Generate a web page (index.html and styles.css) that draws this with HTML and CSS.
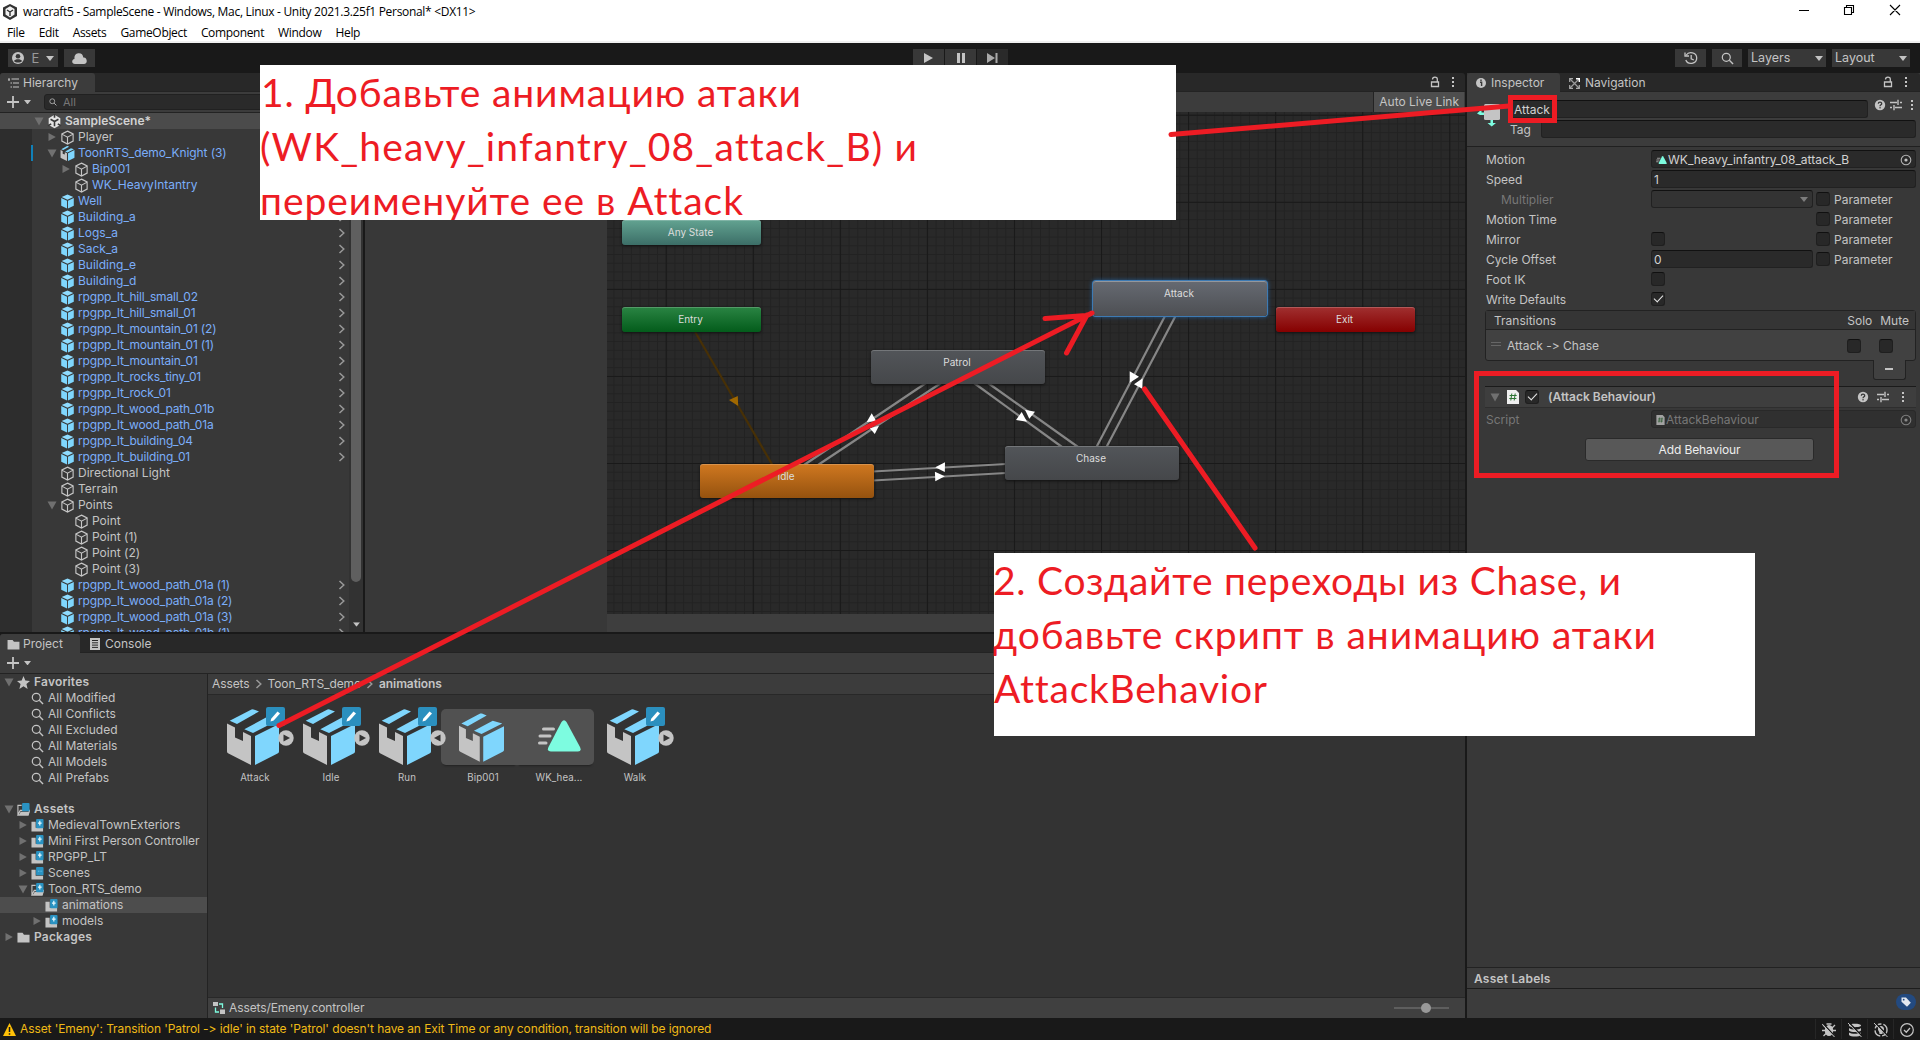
FILE: index.html
```html
<!DOCTYPE html>
<html lang="ru">
<head>
<meta charset="utf-8">
<title>warcraft5 - SampleScene - Unity</title>
<link rel="stylesheet" href="styles.css">
</head>
<body>
<svg class="defs" aria-hidden="true">
  <symbol id="cube" viewBox="0 0 16 16"><path d="M8 1.2 14 4.2V11.8L8 15 2 11.8V4.2ZM2 4.4 8 7.6 14 4.4M8 7.6V15" fill="none" stroke="#c6c6c6" stroke-width="1.2"/></symbol>
  <symbol id="prefab" viewBox="0 0 16 16"><path d="M8 .5 14.2 3.3 8 6.2 1.800 3.300Z" fill="#8fdcff"/><path d="M1.300 4.300 7.500 7.200V15.500L1.300 12.400Z M8.500 7.200 14.700 4.300V12.400L8.500 15.500Z" fill="#7fd6fd"/></symbol>
  <symbol id="model" viewBox="0 0 52 56"><path d="M0 14.500 8 18.500V28.500L16 32V23L24 27V56L1.500 44.500Q0 43.800 0 42.500Z" fill="#c4c4c4"/><path d="M28 27 52 15V42.500Q52 43.800 50.500 44.500L28 56Z" fill="#7fd6fd"/><path d="M2.700 11.700 24.500.4Q25.500 0 26.500.4L32 2.500 10 15ZM17.300 20.300 39 8.500 50 11.700 26 24Z" fill="#7fd6fd"/></symbol>
  <symbol id="right" viewBox="0 0 10 10"><path d="M1.500 1 8.800 5 1.500 9Z" fill="#707070"/></symbol>
  <symbol id="down" viewBox="0 0 10 10"><path d="M.5 1.500H9.500L5 9.500Z" fill="#707070"/></symbol>
  <symbol id="caret" viewBox="0 0 8 5"><path d="M0 0H8L4 5Z" fill="#c4c4c4"/></symbol>
  <symbol id="chev" viewBox="0 0 8 10"><path d="M1.500 1 5.800 5 1.500 9" fill="none" stroke="#999" stroke-width="1.500"/></symbol>
  <symbol id="unity" viewBox="0 0 16 16"><path d="M8 .8 14.200 4.400V11.600L8 15.200 1.800 11.600V4.400Z" fill="#e4e4e4"/><path d="M8 8V13M8 8 3.800 5.600M8 8 12.200 5.600M8 0V4M1 12.500 4.500 10.500M15 12.500 11.500 10.500" stroke="#3a3a3a" stroke-width="1.700" fill="none"/></symbol>
  <symbol id="search" viewBox="0 0 14 14"><circle cx="5.700" cy="5.700" r="4.300" fill="none" stroke="#c4c4c4" stroke-width="1.300"/><path d="M9 9 13 13" stroke="#c4c4c4" stroke-width="1.500"/></symbol>
  <symbol id="folder" viewBox="0 0 14 12"><path d="M.5 1H6L7.500 3H13.500V11.500H.5Z" fill="#c4c4c4"/></symbol>
  <symbol id="folderadd" viewBox="0 0 14 14"><path d="M.5 3H5V9.500H13V13.500H.5Z" fill="#c4c4c4"/><rect x="5.500" width="8" height="10" rx="1" fill="#2a93c3"/><path d="M9.500 2V7M7.500 4.500H11.500" stroke="#e8faff" stroke-width="1.300"/></symbol>
  <symbol id="foldermod" viewBox="0 0 14 14"><path d="M.5 3H5V9.500H13V13.500H.5Z" fill="#c4c4c4"/><rect x="5.500" width="8" height="9" rx="1" fill="#2a93c3"/><path d="M7.500 4.500H12" stroke="#71c8ee" stroke-width="1" stroke-dasharray="1 .8"/></symbol>
  <symbol id="openadd" viewBox="0 0 14 14"><path d="M1 13V2.500H5M1 13 3.500 8H13.500L12 13Z" fill="none" stroke="#c4c4c4" stroke-width="1.200"/><path d="M2 13 4 9.500H13.500L12 13Z" fill="#c4c4c4"/><rect x="5.500" width="8" height="10" rx="1" fill="#2a93c3"/><path d="M9.500 2V7M7.500 4.500H11.500" stroke="#e8faff" stroke-width="1.300"/></symbol>
  <symbol id="openmod" viewBox="0 0 14 14"><path d="M1 13V2.500H5M1 13 3.500 8H13.500L12 13Z" fill="none" stroke="#c4c4c4" stroke-width="1.200"/><path d="M2 13 4 9.500H13.500L12 13Z" fill="#c4c4c4"/><rect x="5.500" width="8" height="9" rx="1" fill="#2a93c3"/></symbol>
  <symbol id="lock" viewBox="0 0 10 12"><path d="M1.500 6H8.500V10.500H1.500ZM2.500 3.500C2.500.5 7.300.5 7.300 3V6" fill="none" stroke="#c4c4c4" stroke-width="1.300"/></symbol>
  <symbol id="dots" viewBox="0 0 4 12"><path d="M1 1H3V3H1ZM1 5H3V7H1ZM1 9H3V11H1Z" fill="#c4c4c4"/></symbol>
  <symbol id="help" viewBox="0 0 12 12"><circle cx="6" cy="6" r="5.200" fill="#c4c4c4"/><path d="M4.300 4.800C4.300 2.600 7.700 2.600 7.700 4.700 7.700 5.900 6 5.800 6 7.200" fill="none" stroke="#383838" stroke-width="1.300"/><rect x="5.400" y="8.100" width="1.300" height="1.300" fill="#383838"/></symbol>
  <symbol id="preset" viewBox="0 0 12 12"><path d="M0 3.500H7M10 3.500H12M0 8.500H2M5 8.500H12M8 .8V6M4 6V11.200" stroke="#c4c4c4" stroke-width="1.400"/></symbol>
  <symbol id="target" viewBox="0 0 12 12"><circle cx="6" cy="6" r="4.800" fill="none" stroke="#b4b4b4" stroke-width="1.100"/><circle cx="6" cy="6" r="1.600" fill="#c4c4c4"/></symbol>
  <symbol id="script" viewBox="0 0 12 14"><path d="M0 0H9L12 3V14H0Z" fill="#efefef"/><path d="M4.800 3.500 3.800 10.500M8.200 3.500 7.200 10.500M2.600 5.500H9.700M2.300 8.500H9.400" stroke="#2d7534" stroke-width="1"/></symbol>
  <symbol id="clip" viewBox="0 0 43 32"><path d="M23.500 2Q26-1.500 28.500 2L42 27Q44 31.500 40 31.500H13Q8.500 31.500 10.500 27Z" fill="#7dfce0"/><path d="M5.500 9H15.500M2 16H12M1.500 23H8" stroke="#c4c4c4" stroke-width="3" stroke-linecap="round"/></symbol>
  <symbol id="pencil" viewBox="0 0 19 19"><rect width="19" height="19" rx="2" fill="#2b8fbe"/><path d="M4.500 14.500 5.200 11.800 11.500 4.500 14 6.500 7.700 13.500Z" fill="#fff"/></symbol>
  <symbol id="fold" viewBox="0 0 16 16"><circle cx="8" cy="8" r="7.700" fill="#c4c4c4"/><path d="M5.500 4.500 12 8 5.500 11.500Z" fill="#333"/></symbol>
</svg>

<header class="titlebar">
  <svg class="applogo" viewBox="0 0 14 16"><path d="M7 0 14 3.500V12L7 16 0 12V3.500Z" fill="#333"/><path d="M7 2.200 11.500 5V10.500L7 13.500 2.500 10.500V5Z" fill="#f2f2f2"/><path d="M7 8V12M7 8 4 6M7 8 10 6" stroke="#333" stroke-width="1.400"/></svg>
  <span class="apptitle">warcraft5 - SampleScene - Windows, Mac, Linux - Unity 2021.3.25f1 Personal* &lt;DX11&gt;</span>
  <svg class="winbtns" viewBox="0 0 104 12"><path d="M0 6.500H10" stroke="#000"/><path d="M45.500 3.500H52.500V10.500H45.500ZM47.500 3.500V1.500H54.500V8.500H52.500M91 1 101 11M101 1 91 11" fill="none" stroke="#000" stroke-width="1.100"/></svg>
</header>
<nav class="menubar"><span>File</span><span>Edit</span><span>Assets</span><span>GameObject</span><span>Component</span><span>Window</span><span>Help</span></nav>

<div class="toolbar">
  <div class="tb account"><svg width="12" height="12" viewBox="0 0 12 12"><circle cx="6" cy="6" r="6" fill="#c4c4c4"/><circle cx="6" cy="4.200" r="2.300" fill="#383838"/><path d="M2 9C3 6.800 9 6.800 10 9 8.500 11 3.500 11 2 9Z" fill="#383838"/></svg><span>E</span><svg width="8" height="5"><use href="#caret"/></svg></div>
  <div class="tb cloud"><svg width="15" height="11" viewBox="0 0 15 11"><path d="M3 11C-.5 11-.8 6.500 2.500 6 2 2 4.500.3 7 .3 9.500.3 11 1.800 11.300 4.500 15.500 4 16 11 12 11Z" fill="#c4c4c4"/></svg></div>
  <div class="playgroup">
    <div class="tb"><svg width="9" height="10" viewBox="0 0 9 10"><path d="M0 0 9 5 0 10Z" fill="#c4c4c4"/></svg></div>
    <div class="tb"><svg width="8" height="10" viewBox="0 0 8 10"><path d="M0 0H3V10H0ZM5 0H8V10H5Z" fill="#c4c4c4"/></svg></div>
    <div class="tb dim"><svg width="11" height="10" viewBox="0 0 11 10"><path d="M0 0 8 5 0 10ZM8.500 0H10.500V10H8.500Z" fill="#aaa"/></svg></div>
  </div>
  <div class="tb hist"><svg width="14" height="14" viewBox="0 0 14 14"><path d="M2.300 4C5 0 12.700 1.500 12.700 7 12.700 13 4 14.500 1.800 9M1 1.500V5H5M7.200 4V7.800L9.800 9" fill="none" stroke="#c4c4c4" stroke-width="1.300"/></svg></div>
  <div class="tb find"><svg width="13" height="13"><use href="#search"/></svg></div>
  <div class="tb drop"><span>Layers</span><svg width="8" height="5"><use href="#caret"/></svg></div>
  <div class="tb drop last"><span>Layout</span><svg width="8" height="5"><use href="#caret"/></svg></div>
</div>

<main class="main">
  <div class="leftside">
    <div class="upper">
      <section class="hierarchy">
        <div class="tabs"><div class="tab htab"><svg width="11" height="10" viewBox="0 0 11 10"><path d="M0 1H2M3.500 1H11M2.500 5H4M5 5H11M2.500 9H4M5 9H11M1 1V3" stroke="#c4c4c4" stroke-width="1.200"/></svg><span>Hierarchy</span></div></div>
        <div class="tools"><svg class="plus" width="12" height="12" viewBox="0 0 12 12"><path d="M6 0V12M0 6H12" stroke="#c4c4c4" stroke-width="1.800"/></svg><svg width="7" height="4.500" viewBox="0 0 8 5"><use href="#caret"/></svg>
          <div class="searchbox"><svg width="8" height="8"><use href="#search"/></svg><span>All</span></div></div>
        <div class="tree">
          <div class="gutter"><i></i></div>
          <div class="rows">
            <div class="row scene"><svg class="ar"><use href="#down"/></svg><svg class="ic"><use href="#unity"/></svg><b>SampleScene*</b></div>
            <div class="row l1"><svg class="ar"><use href="#right"/></svg><svg class="ic"><use href="#cube"/></svg><span>Player</span></div>
            <div class="row l1 blue"><svg class="ar"><use href="#down"/></svg><svg class="ic"><use href="#model"/></svg><span class="tight">ToonRTS_demo_Knight (3)</span></div>
            <div class="row l2 blue"><svg class="ar"><use href="#right"/></svg><svg class="ic"><use href="#cube"/></svg><span>Bip001</span></div>
            <div class="row l2 blue"><i class="ar"></i><svg class="ic"><use href="#cube"/></svg><span>WK_HeavyIntantry</span></div>
            <div class="row l1 blue"><i class="ar"></i><svg class="ic"><use href="#prefab"/></svg><span>Well</span><svg class="go"><use href="#chev"/></svg></div>
            <div class="row l1 blue"><i class="ar"></i><svg class="ic"><use href="#prefab"/></svg><span>Building_a</span><svg class="go"><use href="#chev"/></svg></div>
            <div class="row l1 blue"><i class="ar"></i><svg class="ic"><use href="#prefab"/></svg><span>Logs_a</span><svg class="go"><use href="#chev"/></svg></div>
            <div class="row l1 blue"><i class="ar"></i><svg class="ic"><use href="#prefab"/></svg><span>Sack_a</span><svg class="go"><use href="#chev"/></svg></div>
            <div class="row l1 blue"><i class="ar"></i><svg class="ic"><use href="#prefab"/></svg><span>Building_e</span><svg class="go"><use href="#chev"/></svg></div>
            <div class="row l1 blue"><i class="ar"></i><svg class="ic"><use href="#prefab"/></svg><span>Building_d</span><svg class="go"><use href="#chev"/></svg></div>
            <div class="row l1 blue"><i class="ar"></i><svg class="ic"><use href="#prefab"/></svg><span class="asset">rpgpp_lt_hill_small_02</span><svg class="go"><use href="#chev"/></svg></div>
            <div class="row l1 blue"><i class="ar"></i><svg class="ic"><use href="#prefab"/></svg><span class="asset">rpgpp_lt_hill_small_01</span><svg class="go"><use href="#chev"/></svg></div>
            <div class="row l1 blue"><i class="ar"></i><svg class="ic"><use href="#prefab"/></svg><span class="asset">rpgpp_lt_mountain_01 (2)</span><svg class="go"><use href="#chev"/></svg></div>
            <div class="row l1 blue"><i class="ar"></i><svg class="ic"><use href="#prefab"/></svg><span class="asset">rpgpp_lt_mountain_01 (1)</span><svg class="go"><use href="#chev"/></svg></div>
            <div class="row l1 blue"><i class="ar"></i><svg class="ic"><use href="#prefab"/></svg><span class="asset">rpgpp_lt_mountain_01</span><svg class="go"><use href="#chev"/></svg></div>
            <div class="row l1 blue"><i class="ar"></i><svg class="ic"><use href="#prefab"/></svg><span class="asset">rpgpp_lt_rocks_tiny_01</span><svg class="go"><use href="#chev"/></svg></div>
            <div class="row l1 blue"><i class="ar"></i><svg class="ic"><use href="#prefab"/></svg><span class="asset">rpgpp_lt_rock_01</span><svg class="go"><use href="#chev"/></svg></div>
            <div class="row l1 blue"><i class="ar"></i><svg class="ic"><use href="#prefab"/></svg><span class="asset">rpgpp_lt_wood_path_01b</span><svg class="go"><use href="#chev"/></svg></div>
            <div class="row l1 blue"><i class="ar"></i><svg class="ic"><use href="#prefab"/></svg><span class="asset">rpgpp_lt_wood_path_01a</span><svg class="go"><use href="#chev"/></svg></div>
            <div class="row l1 blue"><i class="ar"></i><svg class="ic"><use href="#prefab"/></svg><span class="asset">rpgpp_lt_building_04</span><svg class="go"><use href="#chev"/></svg></div>
            <div class="row l1 blue"><i class="ar"></i><svg class="ic"><use href="#prefab"/></svg><span class="asset">rpgpp_lt_building_01</span><svg class="go"><use href="#chev"/></svg></div>
            <div class="row l1"><i class="ar"></i><svg class="ic"><use href="#cube"/></svg><span>Directional Light</span></div>
            <div class="row l1"><i class="ar"></i><svg class="ic"><use href="#cube"/></svg><span>Terrain</span></div>
            <div class="row l1"><svg class="ar"><use href="#down"/></svg><svg class="ic"><use href="#cube"/></svg><span>Points</span></div>
            <div class="row l2"><i class="ar"></i><svg class="ic"><use href="#cube"/></svg><span>Point</span></div>
            <div class="row l2"><i class="ar"></i><svg class="ic"><use href="#cube"/></svg><span>Point (1)</span></div>
            <div class="row l2"><i class="ar"></i><svg class="ic"><use href="#cube"/></svg><span>Point (2)</span></div>
            <div class="row l2"><i class="ar"></i><svg class="ic"><use href="#cube"/></svg><span>Point (3)</span></div>
            <div class="row l1 blue"><i class="ar"></i><svg class="ic"><use href="#prefab"/></svg><span class="asset">rpgpp_lt_wood_path_01a (1)</span><svg class="go"><use href="#chev"/></svg></div>
            <div class="row l1 blue"><i class="ar"></i><svg class="ic"><use href="#prefab"/></svg><span class="asset">rpgpp_lt_wood_path_01a (2)</span><svg class="go"><use href="#chev"/></svg></div>
            <div class="row l1 blue"><i class="ar"></i><svg class="ic"><use href="#prefab"/></svg><span class="asset">rpgpp_lt_wood_path_01a (3)</span><svg class="go"><use href="#chev"/></svg></div>
            <div class="row l1 blue"><i class="ar"></i><svg class="ic"><use href="#prefab"/></svg><span class="asset">rpgpp_lt_wood_path_01b (1)</span><svg class="go"><use href="#chev"/></svg></div>
          </div>
          <div class="scroll"><div class="thumb"></div><svg width="7" height="5" viewBox="0 0 8 5"><use href="#caret"/></svg></div>
        </div>
      </section>

      <section class="animator">
        <div class="tabs end"><svg width="10" height="12"><use href="#lock"/></svg><svg width="4" height="12"><use href="#dots"/></svg></div>
        <div class="animtools"><span class="live">Auto Live Link</span></div>
        <div class="animbody">
          <div class="params"></div>
          <div class="graphcol">
            <div class="graph">
              <svg class="wires" width="858" height="502" viewBox="607 112 858 502">
                <defs>
                  <pattern id="minor" width="8.706" height="8.706" patternUnits="userSpaceOnUse" x="665.700" y="201.800"><path d="M0 .5H8.706M.5 0V8.706" stroke="#222" stroke-width="1.100"/></pattern>
                  <pattern id="major" width="87.060" height="87.060" patternUnits="userSpaceOnUse" x="665.700" y="201.800"><path d="M0 .5H87.060M.5 0V87.060" stroke="#191919" stroke-width="1.200"/></pattern>
                </defs>
                <rect x="607" y="112" width="858" height="502" fill="url(#minor)"/>
                <rect x="607" y="112" width="858" height="502" fill="url(#major)"/>
                <path d="M694 330 773 466" stroke="#473006" stroke-width="2.200"/>
                <path d="M729 400 737.800 396 738.200 406Z" fill="#a06800"/>
                <path d="M926 383 804 465M941 383 818 465M974 383 1062 447M988 383 1078 447M1165.500 315 1096.500 447M1176 315 1106.500 447M873 471.500 1006 464M873 480.500 1006 473" stroke="#868686" stroke-width="2.200"/>
                <path d="M1129.700 371.300 1139 376.700 1129.700 382.700ZM1134 384.300 1142.700 378.300 1142.300 388.700ZM1016 420 1021.700 412 1027 421.700ZM1025 409.700 1035 411.700 1029.300 418.700ZM866.700 422 871.700 413.300 876.300 421.300ZM869.800 428.300 879 425.700 874.800 434ZM935.300 467.300 945 462.300 944.800 472ZM934.900 471.700 944.800 476.300 935.300 481.300Z" fill="#fff"/>
              </svg>
              <div class="node small any">Any State</div>
              <div class="node small entry">Entry</div>
              <div class="node small exit">Exit</div>
              <div class="node idle">Idle</div>
              <div class="node patrol">Patrol</div>
              <div class="node chase">Chase</div>
              <div class="node attack">Attack</div>
            </div>
            <div class="graphfoot"></div>
          </div>
        </div>
      </section>
    </div>

    <section class="project">
      <div class="tabs"><div class="tab ptab"><svg width="13" height="11"><use href="#folder"/></svg><span>Project</span></div><div class="tab ctab"><svg width="10" height="12" viewBox="0 0 10 12"><path d="M0 0H10V12H0Z" fill="#c4c4c4"/><path d="M2 2.500H8M2 4.800H8M2 7.100H8M2 9.400H8" stroke="#282828"/></svg><span>Console</span></div></div>
      <div class="tools ptools"><svg class="plus" width="12" height="12" viewBox="0 0 12 12"><path d="M6 0V12M0 6H12" stroke="#c4c4c4" stroke-width="1.800"/></svg><svg width="7" height="4.500" viewBox="0 0 8 5"><use href="#caret"/></svg></div>
      <div class="pbody">
        <div class="ptree">
          <div class="row p0"><svg class="ar"><use href="#down"/></svg><svg class="fi" viewBox="0 0 12 12"><path d="M6 0 7.700 4.200 12 4.500 8.700 7.400 9.800 12 6 9.500 2.200 12 3.300 7.400 0 4.500 4.300 4.200Z" fill="#c4c4c4"/></svg><b>Favorites</b></div>
          <div class="row p1"><i class="ar"></i><svg class="fi"><use href="#search"/></svg><span>All Modified</span></div>
          <div class="row p1"><i class="ar"></i><svg class="fi"><use href="#search"/></svg><span>All Conflicts</span></div>
          <div class="row p1"><i class="ar"></i><svg class="fi"><use href="#search"/></svg><span>All Excluded</span></div>
          <div class="row p1"><i class="ar"></i><svg class="fi"><use href="#search"/></svg><span>All Materials</span></div>
          <div class="row p1"><i class="ar"></i><svg class="fi"><use href="#search"/></svg><span>All Models</span></div>
          <div class="row p1"><i class="ar"></i><svg class="fi"><use href="#search"/></svg><span>All Prefabs</span></div>
          <div class="row p0 second"><svg class="ar"><use href="#down"/></svg><svg class="fi"><use href="#openmod"/></svg><b>Assets</b></div>
          <div class="row p1"><svg class="ar"><use href="#right"/></svg><svg class="fi"><use href="#folderadd"/></svg><span>MedievalTownExteriors</span></div>
          <div class="row p1"><svg class="ar"><use href="#right"/></svg><svg class="fi"><use href="#folderadd"/></svg><span class="tight">Mini First Person Controller</span></div>
          <div class="row p1"><svg class="ar"><use href="#right"/></svg><svg class="fi"><use href="#folderadd"/></svg><span>RPGPP_LT</span></div>
          <div class="row p1"><svg class="ar"><use href="#right"/></svg><svg class="fi"><use href="#foldermod"/></svg><span>Scenes</span></div>
          <div class="row p1"><svg class="ar"><use href="#down"/></svg><svg class="fi"><use href="#openadd"/></svg><span class="tight">Toon_RTS_demo</span></div>
          <div class="row p2 sel"><i class="ar"></i><svg class="fi"><use href="#folderadd"/></svg><span>animations</span></div>
          <div class="row p2"><svg class="ar"><use href="#right"/></svg><svg class="fi"><use href="#folderadd"/></svg><span>models</span></div>
          <div class="row p0"><svg class="ar"><use href="#right"/></svg><svg class="fi"><use href="#folder"/></svg><b>Packages</b></div>
        </div>
        <div class="pfiles">
          <div class="crumbs"><span>Assets</span><svg width="8" height="10"><use href="#chev"/></svg><span>Toon_RTS_demo</span><svg width="8" height="10"><use href="#chev"/></svg><b>animations</b></div>
          <div class="files">
            <div class="file"><div class="thumbnail"><svg class="big"><use href="#model"/></svg><svg class="badge"><use href="#pencil"/></svg><svg class="foldbtn"><use href="#fold"/></svg></div><span>Attack</span></div>
            <div class="file"><div class="thumbnail"><svg class="big"><use href="#model"/></svg><svg class="badge"><use href="#pencil"/></svg><svg class="foldbtn"><use href="#fold"/></svg></div><span>Idle</span></div>
            <div class="file"><div class="thumbnail"><svg class="big"><use href="#model"/></svg><svg class="badge"><use href="#pencil"/></svg><svg class="foldbtn open"><use href="#fold"/></svg></div><span>Run</span></div>
            <div class="file sub first"><div class="thumbnail"><svg class="mid"><use href="#model"/></svg></div><span>Bip001</span></div>
            <div class="file sub lastsub"><div class="thumbnail"><svg class="clipicon"><use href="#clip"/></svg></div><span>WK_hea...</span></div>
            <div class="file"><div class="thumbnail"><svg class="big"><use href="#model"/></svg><svg class="badge"><use href="#pencil"/></svg><svg class="foldbtn"><use href="#fold"/></svg></div><span>Walk</span></div>
          </div>
          <div class="pathbar"><svg width="12" height="12" viewBox="0 0 12 12"><path d="M0 0H5V4H0ZM7 7.500H12V12H7Z" fill="#c4c4c4"/><path d="M6 2H9.500V6M2.500 5.500V10H6" fill="none" stroke="#7dfce0" stroke-width="1.300"/></svg><span class="tight">Assets/Emeny.controller</span><div class="slider"><i></i></div></div>
        </div>
      </div>
    </section>
  </div>

  <aside class="inspector">
    <div class="tabs"><div class="tab itab"><svg width="10" height="10" viewBox="0 0 10 10"><circle cx="5" cy="5" r="5" fill="#c4c4c4"/><path d="M4 4.200H5.600V8M5 1.500V3" stroke="#383838" stroke-width="1.400" fill="none"/></svg><span>Inspector</span></div><div class="tab ntab"><svg width="11" height="11" viewBox="0 0 11 11"><path d="M1 1 10 10M10 1 1 10" stroke="#9a9a9a" stroke-width="1.300"/><path d="M7 .7H10.300V4" fill="none" stroke="#fff" stroke-width="1.400"/><path d="M.7 4V.7H4M.7 7V10.300H4M10.300 7V10.300H7" fill="none" stroke="#aaa" stroke-width="1.200"/></svg><span>Navigation</span></div><div class="tabmenu"><svg width="10" height="12"><use href="#lock"/></svg><svg width="4" height="12"><use href="#dots"/></svg></div></div>
    <div class="ihead">
      <svg class="stateicon" width="24" height="24" viewBox="0 0 24 24"><rect x="7" y="1" width="16" height="16" rx="1.500" fill="#c4c4c4"/><path d="M0 10.500 4.500 6.500V9.500H7V12H3ZM13.500 17H16V20H19L14.700 23.500 10.500 20H13.500Z" fill="#7dfce0"/></svg>
      <div class="iheadfields">
        <div class="hrow"><div class="field name">Attack</div><svg class="hhelp"><use href="#help"/></svg><svg class="hpreset"><use href="#preset"/></svg><svg class="hdots"><use href="#dots"/></svg></div>
        <div class="hrow tag"><span>Tag</span><div class="field"></div></div>
      </div>
    </div>
    <div class="props">
      <div class="prop"><label>Motion</label><div class="field obj"><svg width="11" height="8" viewBox="0 0 43 32"><use href="#clip"/></svg><span>WK_heavy_infantry_08_attack_B</span><svg class="pick"><use href="#target"/></svg></div></div>
      <div class="prop"><label>Speed</label><div class="field">1</div></div>
      <div class="prop"><label class="sublabel">Multiplier</label><div class="field half off"><svg width="8" height="5"><use href="#caret"/></svg></div><i class="check"></i><span>Parameter</span></div>
      <div class="prop"><label>Motion Time</label><div class="half"></div><i class="check"></i><span>Parameter</span></div>
      <div class="prop"><label>Mirror</label><div class="half"><i class="check"></i></div><i class="check"></i><span>Parameter</span></div>
      <div class="prop"><label>Cycle Offset</label><div class="field half">0</div><i class="check"></i><span>Parameter</span></div>
      <div class="prop"><label>Foot IK</label><i class="check"></i></div>
      <div class="prop"><label>Write Defaults</label><i class="check on"></i></div>
    </div>
    <div class="trans">
      <div class="transhead"><span>Transitions</span><span class="solo">Solo</span><span>Mute</span></div>
      <div class="transrow"><i class="grip"></i><span>Attack -&gt; Chase</span><i class="check"></i><i class="check mute"></i></div>
    </div>
    <div class="minus"><i></i></div>
    <div class="behead"><svg class="ar"><use href="#down"/></svg><svg class="cs"><use href="#script"/></svg><i class="check on"></i><b>(Attack Behaviour)</b><svg width="12" height="12"><use href="#help"/></svg><svg width="12" height="12"><use href="#preset"/></svg><svg width="4" height="12"><use href="#dots"/></svg></div>
    <div class="prop scriptrow"><label>Script</label><div class="field obj"><svg width="9" height="10" viewBox="0 0 12 14"><use href="#script"/></svg><span>AttackBehaviour</span><svg class="pick"><use href="#target"/></svg></div></div>
    <div class="addbtn">Add Behaviour</div>
    <div class="spacer"></div>
    <div class="labelshead">Asset Labels</div>
    <div class="labels"><div class="pill"><svg width="10" height="10" viewBox="0 0 10 10"><path d="M.5.5H5L9.800 5.800 6 9.800.5 4.800Z" fill="#e4e8f0"/><circle cx="2.700" cy="2.700" r=".9" fill="#234a80"/></svg></div></div>
  </aside>
</main>

<footer class="status">
  <svg width="13" height="13" viewBox="0 0 13 13"><path d="M6.500 0 13 13H0Z" fill="#ffc107"/><path d="M6.500 4V9M6.500 10.200V11.700" stroke="#191919" stroke-width="1.500"/></svg>
  <span>Asset 'Emeny': Transition 'Patrol -&gt; idle' in state 'Patrol' doesn't have an Exit Time or any condition, transition will be ignored</span>
  <div class="staticons">
    <i><svg viewBox="0 0 14 14"><ellipse cx="7" cy="7.500" rx="4.200" ry="5.500" fill="#c4c4c4"/><path d="M1 2 4 5M0 7.500H3M1.500 13 4 10.500M13 2 10 5M14 7.500H11M12.500 13 10 10.500M4.500 1H9.500" stroke="#c4c4c4" stroke-width="1.300"/><path d="M1 .5 13 13.500" stroke="#191919" stroke-width="1.400"/><path d="M0 .8 12.500 14" stroke="#c4c4c4"/></svg></i>
    <i><svg viewBox="0 0 14 14"><path d="M1 2.500C1 .3 13 .3 13 2.500S1 4.700 1 2.500M1 5C3 7 11 7 13 5V7.500C11 9.500 3 9.500 1 7.500ZM1 9.500C3 11.300 11 11.300 13 9.500V12C11 14 3 14 1 12Z" fill="#c4c4c4"/><path d="M1.500 0 14 13" stroke="#191919" stroke-width="1.400"/><path d="M0 0 13.500 14" stroke="#c4c4c4"/></svg></i>
    <i><svg viewBox="0 0 14 14"><circle cx="7" cy="7" r="6" fill="none" stroke="#c4c4c4" stroke-width="1.400" stroke-dasharray="8 2"/><path d="M4 6C4 2 10 2 10 6 10 8 8.500 8 8.500 11H5.500C5.500 8 4 8 4 6" fill="#c4c4c4"/><path d="M1.500 0 14 13" stroke="#191919" stroke-width="1.400"/><path d="M0 0 13.500 14" stroke="#c4c4c4"/></svg></i>
    <i><svg viewBox="0 0 14 14"><circle cx="7" cy="7" r="6.300" fill="none" stroke="#c4c4c4" stroke-width="1.200"/><path d="M4 7 6.300 9.200 10 5" fill="none" stroke="#c4c4c4" stroke-width="1.300"/></svg></i>
  </div>
</footer>

<svg class="notes" width="1920" height="1040" viewBox="0 0 1920 1040">
  <rect x="260" y="65" width="916" height="155" fill="#fff"/>
  <rect x="994" y="553" width="761" height="183" fill="#fff"/>
  <clipPath id="box1"><rect x="260" y="65" width="916" height="155"/></clipPath>
  <g class="notetext" clip-path="url(#box1)">
    <text x="261" y="107" textLength="540">1. Добавьте анимацию атаки</text>
    <text x="260" y="161" textLength="657">(WK_heavy_infantry_08_attack_B) и</text>
    <text x="260" y="215" textLength="483">переименуйте ее в Attack</text>
  </g>
  <g class="notetext">
    <text x="993" y="595" textLength="628">2. Создайте переходы из Chase, и</text>
    <text x="993" y="649" textLength="663">добавьте скрипт в анимацию атаки</text>
    <text x="994" y="703" textLength="273">AttackBehavior</text>
  </g>
  <g fill="none" stroke="#ed1c24" stroke-width="5" stroke-linecap="round">
    <path d="M279 725.500 1092 313M1045 318.500 1086 315.500M1066.500 353 1087 315"/>
    <path d="M1171 134.500 1509 106"/>
    <path d="M1144.500 389 1255 548"/>
    <path d="M1510.500 97.500H1554.500V120.500H1510.500ZM1476.500 373.500H1836.500V475.500H1476.500Z" stroke-linecap="butt"/>
  </g>
</svg>
</body>
</html>
```
FILE: styles.css
```css
* { box-sizing: border-box; }
body { margin: 0; width: 1920px; height: 1040px; overflow: hidden; display: flex; flex-direction: column; background: #191919; color: #c4c4c4; font: 12px/16px Inter, sans-serif; font-variant-ligatures: none; font-feature-settings: "calt" 0, "liga" 0; }
svg { display: block; flex: none; }
i { display: block; flex: none; }
span, b { white-space: nowrap; }
b { font-weight: 600; }
.defs { position: absolute; width: 0; height: 0; }
.tight { letter-spacing: -.1px; }
.asset { letter-spacing: -.16px; }

.titlebar { height: 23px; background: #fff; color: #000; display: flex; align-items: center; padding-left: 3px; font: 12px/16px "Open Sans", sans-serif; }
.applogo { width: 14px; height: 16px; margin-right: 6px; }
.apptitle { flex: 1; letter-spacing: -.31px; }
.winbtns { width: 104px; height: 12px; margin: -3px 17px 0 0; }
.menubar { height: 20px; background: #fff; color: #000; border-bottom: 2px solid #f0f0f0; display: flex; gap: 14px; padding-left: 7px; font: 12px/19px "Open Sans", sans-serif; letter-spacing: -.33px; }

.toolbar { height: 30px; flex: none; display: flex; align-items: center; padding: 0 10px 0 8px; }
.tb { height: 18px; background: #383838; display: flex; align-items: center; justify-content: center; }
.account { width: 50px; gap: 8px; color: #999; }
.account span { font-size: 13px; }
.account svg:last-child { margin-left: -1px; }
.cloud { width: 31px; margin-left: 6px; }
.playgroup { display: flex; gap: 1px; margin: 0 auto 0 818px; }
.playgroup .tb { width: 31px; }
.playgroup .dim { background: #2a2a2a; }
.hist { width: 31px; margin-right: 6px; }
.find { width: 30px; margin-right: 6px; }
.drop { width: 78px; margin-right: 6px; justify-content: space-between; padding: 0 3px; font-size: 12.5px; }
.last { margin-right: 0; }

.main { height: 945px; flex: none; display: flex; gap: 2px; }
.leftside { width: 1465px; display: flex; flex-direction: column; gap: 2px; }
.upper { height: 559px; display: flex; gap: 2px; }
.tabs { height: 19px; flex: none; background: #282828; border-bottom: 1px solid #232323; display: flex; border-radius: 3px 3px 0 0; }
.tab { height: 19px; display: flex; align-items: center; padding-top: 1px; }
.htab, .ptab, .itab { background: #3c3c3c; border-radius: 3px 3px 0 0; }
.tools { height: 21px; flex: none; background: #3c3c3c; border-bottom: 1px solid #232323; display: flex; align-items: center; padding-left: 7px; gap: 5px; }
.row { height: 16px; display: flex; align-items: center; flex: none; }
.ar { width: 10px; height: 10px; margin-right: 3px; flex: none; }

.hierarchy { width: 363px; display: flex; flex-direction: column; overflow: hidden; }
.htab { width: 95px; padding-left: 8px; gap: 4px; }
.searchbox { flex: 1; height: 16px; margin: 0 0 0 8px; background: #2a2a2a; border: 1px solid #212121; border-radius: 3px; display: flex; align-items: center; gap: 6px; padding-left: 4px; color: #777; font-size: 11px; }
.tree { height: 519px; display: flex; background: #383838; }
.gutter { width: 32px; background: #2d2d2d; border-top: 16px solid #4b4b4b; padding-top: 16px; }
.gutter i { width: 2px; height: 16px; margin-left: 31px; margin-right: -2px; background: #1080b8; }
.rows { flex: 1; overflow: hidden; display: flex; flex-direction: column; }
.ic { width: 15px; height: 15px; margin-right: 3px; flex: none; }
.scene { background: #4b4b4b; padding-left: 2px; }
.scene b { color: #d2d2d2; }
.l1 { padding-left: 15px; }
.l2 { padding-left: 29px; }
.blue { color: #7baefa; }
.go { width: 8px; height: 10px; margin-left: auto; margin-right: 3px; }
.scroll { width: 14px; background: #323232; display: flex; flex-direction: column; align-items: center; }
.thumb { width: 10px; height: 469px; background: #5f5f5f; border-radius: 0 0 5px 5px; margin-bottom: 41px; }
.scroll svg { margin-top: -1px; }

.animator { width: 1100px; display: flex; flex-direction: column; }
.end { justify-content: flex-end; align-items: center; gap: 11px; padding-right: 10px; }
.animtools { height: 20px; background: #3c3c3c; display: flex; justify-content: flex-end; padding-right: 1px; }
.live { background: #4e4e4e; border-left: 1px solid #232323; padding: 2px 5px 0; }
.animbody { height: 520px; display: flex; }
.params { width: 242px; background: #383838; }
.graphcol { width: 858px; display: flex; flex-direction: column; }
.graph { height: 502px; position: relative; background: #292929; overflow: hidden; }
.graphfoot { height: 18px; background: #3e3e3e; }
.wires { position: absolute; left: 0; top: 0; }
.node { position: absolute; width: 174px; height: 34px; padding: 5px 2px 0 0; border-radius: 3px; text-align: center; font-size: 10px; line-height: 14px; color: #ddd; background: linear-gradient(#525559, #45474a); box-shadow: inset 0 1px rgba(255,255,255,.2), 0 1px 3px #111; }
.small { width: 139px; height: 25px; }
.any { left: 15px; top: 108px; background: linear-gradient(#62a391, #3c6e67); }
.entry { left: 15px; top: 195px; background: linear-gradient(#2a8443, #035c1b); }
.exit { left: 669px; top: 195px; background: linear-gradient(#a03030, #860000); }
.idle { left: 93px; top: 352px; background: linear-gradient(#d07820, #95520f); }
.patrol { left: 264px; top: 238px; }
.chase { left: 398px; top: 334px; }
.attack { left: 486px; top: 169px; height: 35px; background: linear-gradient(#666a72, #4d4f53); box-shadow: inset 0 1px rgba(255,255,255,.3), 0 0 0 1px #3d7ab3, 0 0 4px 1px #25598c; }

.project { height: 384px; display: flex; flex-direction: column; }
.ptab { width: 80px; padding-left: 7px; gap: 3px; }
.ctab { padding-left: 10px; gap: 5px; }
.pbody { height: 344px; display: flex; }
.ptree { width: 208px; background: #383838; border-right: 1px solid #232323; }
.ptree b { letter-spacing: .2px; }
.p0 { padding-left: 4px; }
.p1 { padding-left: 18px; }
.p2 { padding-left: 32px; }
.sel { background: #4d4d4d; }
.second { margin-top: 15px; }
.fi { width: 13px; height: 13px; margin-right: 4px; flex: none; }
.pfiles { flex: 1; display: flex; flex-direction: column; background: #333; }
.crumbs { height: 21px; background: #3c3c3c; border-bottom: 1px solid #282828; display: flex; align-items: center; padding-left: 4px; gap: 5px; letter-spacing: -.1px; }
.files { flex: 1; display: flex; padding: 14px 0 0 9px; }
.file { width: 76px; text-align: center; font-size: 9.7px; letter-spacing: .1px; }
.thumbnail { height: 56px; margin-bottom: 5px; position: relative; display: flex; align-items: center; padding-left: 10px; }
.big { width: 52px; height: 56px; }
.mid { width: 45px; height: 49px; }
.clipicon { width: 43px; height: 32px; margin-top: -3px; }
.sub .thumbnail { margin-left: -4px; margin-right: 4px; padding-left: 18px; background: #515151; box-shadow: 0 3px 2px -2px #222; }
.first .thumbnail { border-radius: 5px 0 0 5px; }
.lastsub .thumbnail { border-radius: 0 5px 5px 0; padding-left: 21px; margin-right: 3px; }
.badge { position: absolute; width: 19px; height: 19px; left: 49px; top: -2px; }
.foldbtn { position: absolute; width: 16px; height: 16px; left: 61px; top: 21px; z-index: 1; }
.open { transform: scaleX(-1); }
.pathbar { height: 21px; background: #404040; border-top: 1px solid #282828; display: flex; align-items: center; padding: 0 16px 0 5px; gap: 4px; }
.slider { width: 55px; height: 2px; margin-left: auto; background: #5e5e5e; }
.slider i { width: 10px; height: 10px; border-radius: 5px; background: #999; margin: -4px 0 0 27px; }

.inspector { width: 453px; background: #383838; display: flex; flex-direction: column; }
.itab { width: 93px; padding-left: 9px; gap: 5px; }
.ntab { padding-left: 9px; gap: 5px; }
.tabmenu { margin-left: auto; display: flex; align-items: center; gap: 11px; padding-right: 12px; }
.ihead { height: 55px; flex: none; background: #3c3c3c; border-bottom: 1px solid #202020; display: flex; padding: 8px 4px 0 10px; }
.stateicon { margin: 3px 0 0; }
.iheadfields { flex: 1; display: flex; flex-direction: column; gap: 2px; }
.hrow { display: flex; height: 18px; }
.hhelp { width: 12px; height: 12px; margin: -1px 0 0 6px; }
.hpreset { width: 12px; height: 12px; margin: -1px 0 0 4px; }
.hdots { width: 4px; height: 12px; margin: -1px 2px 0 8px; }
.field { flex: 1; height: 18px; background: #2a2a2a; border: 1px solid #212121; border-top-color: #111; border-radius: 3px; padding: 1px 0 0 2px; display: flex; align-items: center; color: #d2d2d2; }
.name { margin-left: 9px; padding-left: 3px; }
.tag { padding-left: 9px; gap: 9px; }
.tag span { padding-top: 2px; width: 22px; }
.props { padding-top: 3px; }
.prop { height: 20px; display: flex; align-items: flex-start; padding: 0 4px 0 19px; }
.prop span { line-height: 19px; }
.prop label { width: 165px; line-height: 19px; flex: none; }
.prop .sublabel { padding-left: 15px; color: #777; }
.props .half { flex: none; width: 162px; margin-right: 3px; display: flex; }
.off { background: #333; justify-content: flex-end; padding-right: 4px; }
.off svg { opacity: .5; }
.check { width: 14px; height: 14px; margin-top: 2px; margin-left: 0; margin-right: 4px; background: #282828; border: 1px solid #1f1f1f; border-top-color: #101010; border-radius: 3px; flex: none; }
.on::after { content: ""; display: block; width: 4px; height: 8px; margin: 0 0 0 4px; border: solid #e8e8e8; border-width: 0 1.6px 1.6px 0; transform: rotate(43deg); }
.obj svg { margin: 0 1px 0 2px; }
.obj .pick { width: 12px; height: 12px; margin: 0 3px 0 auto; }
.trans { width: 431px; height: 51px; flex: none; margin: 0 0 0 18px; border: 1px solid #222; border-radius: 3px; background: #414141; }
.transhead { height: 19px; border-bottom: 1px solid #222; background: #353535; display: flex; gap: 8px; line-height: 20px; padding: 0 6px 0 8px; }
.solo { margin-left: auto; }
.transrow { height: 30px; display: flex; align-items: center; padding: 1px 0 0 5px; }
.transrow span { flex: 1; }
.transrow .check { margin: 0 18px 0 0; }
.transrow .mute { margin-right: 22px; }
.grip { width: 10px; height: 4px; margin: -3px 6px 0 0; border: solid #666; border-width: 1px 0; }
.minus { width: 33px; height: 20px; flex: none; margin: -1px 0 6px 406px; background: #414141; border: 1px solid #222; border-top: 0; border-radius: 0 0 3px 3px; padding: 8px 0 0 11px; }
.minus i { width: 8px; height: 2px; background: #c4c4c4; }
.behead { height: 22px; flex: none; margin-left: 18px; margin-right: 4px; border-top: 1px solid #1b1b1b; border-bottom: 1px solid #2e2e2e; background: #3e3e3e; display: flex; align-items: center; padding: 0 11px 0 5px; }
.behead .ar { margin-right: 7px; }
.cs { width: 12px; height: 14px; margin-right: 6px; }
.behead .check { margin: 0 9px 0 0; }
.behead b { flex: 1; }
.behead > svg:nth-last-child(-n+2) { margin-left: 8px; }
.behead > svg:last-child { margin-left: 12px; }
.scriptrow { margin-top: 2px; height: 28px; color: #777; }
.scriptrow .field { background: #303030; border-color: #292929; color: #777; }
.scriptrow svg { opacity: .6; }
.addbtn { width: 229px; height: 23px; flex: none; margin-left: 118px; background: #585858; border: 1px solid #2a2a2a; border-radius: 3px; text-align: center; line-height: 21px; color: #eee; letter-spacing: -.1px; }
.spacer { flex: 1; }
.labelshead { height: 22px; border-top: 1px solid #222; border-bottom: 1px solid #1d1d1d; background: #3c3c3c; padding-left: 7px; line-height: 21px; font-weight: 600; letter-spacing: .2px; }
.labels { height: 29px; background: #3c3c3c; padding: 5px 4px 0 0; display: flex; justify-content: flex-end; }
.pill { width: 20px; height: 16px; border-radius: 8px; background: #234a80; display: flex; align-items: center; justify-content: center; }

.status { height: 22px; flex: none; display: flex; align-items: center; padding-left: 3px; gap: 4px; color: #f0ba16; letter-spacing: -.1px; }
.staticons { margin-left: auto; display: flex; padding-right: 1px; }
.staticons i { width: 26px; height: 20px; border-left: 1px solid #262626; display: flex; align-items: center; justify-content: center; padding-top: 2px; }
.staticons svg { width: 14px; height: 14px; }

.notes { position: absolute; left: 0; top: 0; }
.notetext { font: 39px Lato, "Open Sans", sans-serif; fill: #ed1c24; font-variant-ligatures: none; font-feature-settings: "liga" 0; }
```
